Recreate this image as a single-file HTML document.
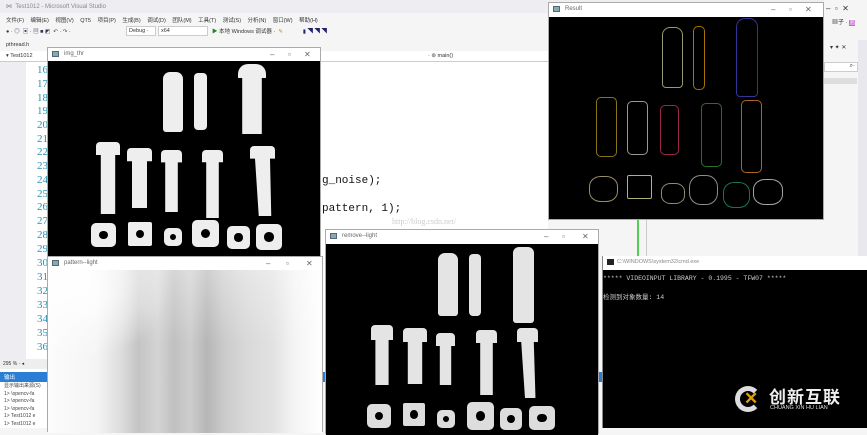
<!DOCTYPE html>
<html><head><meta charset="utf-8"><style>
*{margin:0;padding:0;box-sizing:border-box}
body{width:867px;height:428px;overflow:hidden;position:relative;background:#f5f5f5;font-family:"Liberation Sans","Noto Sans CJK SC",sans-serif;font-size:6px;color:#333}
.a{position:absolute}
.blk{background:#000}
.tb{background:#fff;border:1px solid #aaa}
.tt{font-size:6px;color:#666;padding:3px 0 0 16px;height:13px;white-space:nowrap}
.ic{position:absolute;left:4px;top:3px;width:7px;height:6px;background:#8aa;border:1px solid #567}
.ctl{position:absolute;top:2px;font-size:8px;color:#666}
.b{position:absolute;background:#eee;border-radius:4px}
.n{position:absolute;background:#eee;border-radius:5px}
.n::after{content:"";position:absolute;left:32%;top:32%;width:36%;height:36%;background:#000;border-radius:50%}
.ln{position:absolute;left:30px;width:18px;text-align:right;font-family:"Liberation Serif",serif;font-size:11px;color:#2b91af}
.c{position:absolute;border:1px solid;border-radius:5px;opacity:.75}
.h{position:absolute;border:1px solid;border-radius:40%;opacity:.75}
</style></head><body>
<div class="a" style="left:0;top:0;width:867px;height:13px;background:#eeeef2"></div>
<div class="a" style="left:6px;top:3px;color:#888;font-size:6px">⋈ &nbsp;Test1012 - Microsoft Visual Studio</div>
<div class="a" style="left:6px;top:16px;font-size:5.5px;color:#333;white-space:nowrap;word-spacing:5px">文件(F) 编辑(E) 视图(V) QT5 项目(P) 生成(B) 调试(D) 团队(M) 工具(T) 测试(S) 分析(N) 窗口(W) 帮助(H)</div>
<div class="a" style="left:6px;top:27px;font-size:5.5px;color:#335;white-space:nowrap">● · ◎ &nbsp;▣ · ▤ ■ ◩ &nbsp;↶ · ↷ ·</div>
<div class="a" style="left:126px;top:26px;width:30px;height:10px;border:1px solid #ccc;background:#fff;font-size:5.5px;padding:1px 2px">Debug ·</div>
<div class="a" style="left:158px;top:26px;width:50px;height:10px;border:1px solid #ccc;background:#fff;font-size:5.5px;padding:1px 2px">x64</div>
<div class="a" style="left:212px;top:27px;font-size:5.5px;color:#333;white-space:nowrap"><span style="color:#1a8a1a">▶</span> 本地 Windows 调试器 · &nbsp;<span style="color:#c80">✎</span> &nbsp;&nbsp;&nbsp;&nbsp;&nbsp;&nbsp;&nbsp;&nbsp;&nbsp;&nbsp;&nbsp;&nbsp;<span style="color:#226">▮ ◥ ◥ ◥</span></div>
<div class="a" style="left:6px;top:42px;font-size:5.5px">pthread.h</div>
<div class="a" style="left:0;top:51px;width:548px;height:11px;background:#fff;border-bottom:1px solid #ccc"></div>
<div class="a" style="left:6px;top:53px;font-size:5.5px">▾ Test1012</div>
<div class="a" style="left:428px;top:53px;font-size:5.5px">· ⊚ main()</div>
<div class="a" style="left:0;top:62px;width:548px;height:310px;background:#fff"></div>
<div class="a" style="left:0;top:62px;width:26px;height:300px;background:#eeeef2"></div>
<div class="ln" style="top:64px">16</div><div class="ln" style="top:78px">17</div><div class="ln" style="top:92px">18</div><div class="ln" style="top:105px">19</div><div class="ln" style="top:119px">20</div><div class="ln" style="top:133px">21</div><div class="ln" style="top:146px">22</div><div class="ln" style="top:160px">23</div><div class="ln" style="top:174px">24</div><div class="ln" style="top:188px">25</div><div class="ln" style="top:201px">26</div><div class="ln" style="top:215px">27</div><div class="ln" style="top:229px">28</div><div class="ln" style="top:243px">29</div><div class="ln" style="top:257px">30</div><div class="ln" style="top:271px">31</div><div class="ln" style="top:285px">32</div><div class="ln" style="top:299px">33</div><div class="ln" style="top:313px">34</div><div class="ln" style="top:327px">35</div><div class="ln" style="top:341px">36</div>
<div class="a" style="left:322px;top:175px;font-family:'Liberation Mono',monospace;font-size:11px;color:#111">g_noise);</div>
<div class="a" style="left:322px;top:203px;font-family:'Liberation Mono',monospace;font-size:11px;color:#111">pattern, 1);</div>
<div class="a" style="left:392px;top:217px;font-family:'Liberation Serif',serif;font-size:8px;color:#ccc">http://blog.csdn.net/</div>
<div class="a" style="left:0;top:359px;width:47px;height:10px;background:#eee;font-size:5px;padding:2px 3px">295 % · ◂</div>
<div class="a" style="left:0;top:372px;width:867px;height:10px;background:#2a7fd4"></div>
<div class="a" style="left:4px;top:373px;color:#fff;font-size:5.5px">输出</div>
<div class="a" style="left:0;top:382px;width:47px;height:46px;background:#fff;font-size:5px;line-height:7.5px;padding:1px 4px;color:#444;white-space:nowrap">显示输出来源(S)<br>1&gt; \opencv-fa<br>1&gt; \opencv-fa<br>1&gt; \opencv-fa<br>1&gt; Test1012 e<br>1&gt; Test1012 e</div>
<div class="a" style="left:824px;top:0;width:43px;height:372px;background:#f5f5f5"></div>
<div class="a" style="left:826px;top:4px;font-size:8px;color:#333;white-space:nowrap">– &nbsp;▫ &nbsp;✕</div>
<div class="a" style="left:832px;top:17px;font-size:6px;color:#333">▦子 · <span style="background:#c6c;color:#fff">蓝</span></div>
<div class="a" style="left:830px;top:44px;font-size:6px">▾ ✦ ✕</div>
<div class="a" style="left:824px;top:62px;width:34px;height:10px;background:#fff;border:1px solid #ccc;font-size:6px;text-align:right;padding-right:2px">⌕·</div>
<div class="a" style="left:824px;top:78px;width:33px;height:6px;background:#ddd"></div>
<div class="a" style="left:858px;top:40px;width:9px;height:330px;background:#e8e8ee"></div>
<div class="a" style="left:637px;top:220px;width:2px;height:36px;background:#5c5"></div>
<div class="a" style="left:646px;top:220px;width:1px;height:37px;background:#ccc"></div>

<div class="a tb" style="left:47px;top:47px;width:274px;height:212px">
<div class="tt">img_thr</div><div class="ic"></div>
<div class="ctl" style="left:222px">–</div><div class="ctl" style="left:240px">▫</div><div class="ctl" style="left:256px">✕</div>
<div class="a blk" style="left:0;top:13px;width:272px;height:197px"></div>
</div>
<div class="b" style="left:163px;top:72px;width:20px;height:60px;border-radius:7px 7px 3px 3px"></div>
<div class="b" style="left:194px;top:73px;width:13px;height:57px"></div>
<div class="b" style="left:238px;top:64px;width:28px;height:70px;border-radius:10px 10px 3px 3px;clip-path:polygon(0 0,100% 0,100% 20%,85% 20%,85% 100%,15% 100%,15% 20%,0 20%)"></div>
<div class="b" style="left:96px;top:142px;width:24px;height:72px;clip-path:polygon(0 0,100% 0,100% 18%,80% 18%,80% 100%,20% 100%,20% 18%,0 18%)"></div>
<div class="b" style="left:127px;top:148px;width:25px;height:60px;clip-path:polygon(0 0,100% 0,100% 22%,80% 22%,80% 100%,20% 100%,20% 22%,0 22%)"></div>
<div class="b" style="left:161px;top:150px;width:21px;height:62px;clip-path:polygon(0 0,100% 0,100% 20%,80% 20%,80% 100%,20% 100%,20% 20%,0 20%)"></div>
<div class="b" style="left:202px;top:150px;width:21px;height:68px;clip-path:polygon(0 0,100% 0,100% 18%,80% 18%,80% 100%,20% 100%,20% 18%,0 18%)"></div>
<div class="b" style="left:250px;top:146px;width:25px;height:70px;clip-path:polygon(0 0,100% 0,100% 18%,80% 18%,85% 100%,35% 100%,20% 18%,0 18%)"></div>
<div class="n" style="left:91px;top:223px;width:25px;height:24px"></div>
<div class="n" style="left:128px;top:222px;width:24px;height:24px;border-radius:2px"></div>
<div class="n" style="left:164px;top:228px;width:18px;height:18px"></div>
<div class="n" style="left:192px;top:220px;width:27px;height:27px"></div>
<div class="n" style="left:227px;top:226px;width:23px;height:23px"></div>
<div class="n" style="left:256px;top:224px;width:26px;height:26px"></div>

<div class="a tb" style="left:548px;top:2px;width:276px;height:218px">
<div class="tt">Result</div><div class="ic"></div>
<div class="ctl" style="left:222px">–</div><div class="ctl" style="left:240px">▫</div><div class="ctl" style="left:256px">✕</div>
<div class="a blk" style="left:0;top:14px;width:274px;height:202px"></div>
</div>
<div class="c" style="left:662px;top:27px;width:21px;height:61px;border-color:#cc9;border-radius:8px 8px 4px 4px"></div>
<div class="c" style="left:693px;top:26px;width:12px;height:64px;border-color:#d90"></div>
<div class="c" style="left:736px;top:18px;width:22px;height:79px;border-color:#44c;border-radius:9px 9px 4px 4px"></div>
<div class="c" style="left:596px;top:97px;width:21px;height:60px;border-color:#b92"></div>
<div class="c" style="left:627px;top:101px;width:21px;height:54px;border-color:#ccb"></div>
<div class="c" style="left:660px;top:105px;width:19px;height:50px;border-color:#c36"></div>
<div class="c" style="left:701px;top:103px;width:21px;height:64px;border-color:#393"></div>
<div class="c" style="left:741px;top:100px;width:21px;height:73px;border-color:#d83"></div>
<div class="h" style="left:589px;top:176px;width:29px;height:26px;border-color:#cb8"></div>
<div class="c" style="left:627px;top:175px;width:25px;height:24px;border-color:#ee9;border-radius:2px"></div>
<div class="h" style="left:661px;top:183px;width:24px;height:21px;border-color:#bb9"></div>
<div class="h" style="left:689px;top:175px;width:29px;height:30px;border-color:#bbb"></div>
<div class="h" style="left:723px;top:182px;width:27px;height:26px;border-color:#297"></div>
<div class="h" style="left:753px;top:179px;width:30px;height:26px;border-color:#ddd"></div>

<div class="a tb" style="left:47px;top:256px;width:276px;height:176px">
<div class="tt">pattern--light</div><div class="ic"></div>
<div class="ctl" style="left:218px">–</div><div class="ctl" style="left:238px">▫</div><div class="ctl" style="left:258px">✕</div>
<div class="a" style="left:0;top:13px;width:274px;height:163px;background:linear-gradient(90deg,#fcfcfc 0%,#f4f4f4 18%,#dcdcdc 27%,#c4c4c4 33%,#d4d4d4 40%,#c0c0c0 46%,#cdcdcd 52%,#b6b6b6 58%,#cacaca 64%,#d8d8d8 72%,#e2e2e2 82%,#f4f4f4 90%,#fff 100%)"></div>
<div class="a" style="left:0;top:13px;width:274px;height:163px;background:radial-gradient(ellipse 35% 45% at 10% 10%,rgba(255,255,255,.95),rgba(255,255,255,0))"></div>
<div class="a" style="left:0;top:13px;width:274px;height:163px;background:linear-gradient(180deg,rgba(255,255,255,.35),rgba(255,255,255,0) 45%)"></div>
</div>

<div class="a tb" style="left:325px;top:229px;width:274px;height:205px">
<div class="tt">remove--light</div><div class="ic"></div>
<div class="ctl" style="left:218px">–</div><div class="ctl" style="left:236px">▫</div><div class="ctl" style="left:256px">✕</div>
<div class="a blk" style="left:0;top:14px;width:272px;height:191px"></div>
</div>
<div class="b" style="left:438px;top:253px;width:20px;height:63px;border-radius:7px 7px 3px 3px;background:#e4e4e4"></div>
<div class="b" style="left:469px;top:254px;width:12px;height:62px;background:#e4e4e4"></div>
<div class="b" style="left:513px;top:247px;width:21px;height:76px;border-radius:6px 6px 3px 3px;background:#e4e4e4"></div>
<div class="b" style="left:371px;top:325px;width:22px;height:60px;background:#e4e4e4;clip-path:polygon(0 0,100% 0,100% 25%,80% 25%,80% 100%,20% 100%,20% 25%,0 25%)"></div>
<div class="b" style="left:403px;top:328px;width:24px;height:56px;background:#e4e4e4;clip-path:polygon(0 0,100% 0,100% 25%,80% 25%,80% 100%,20% 100%,20% 25%,0 25%)"></div>
<div class="b" style="left:436px;top:333px;width:19px;height:52px;background:#e4e4e4;clip-path:polygon(0 0,100% 0,100% 25%,80% 25%,80% 100%,20% 100%,20% 25%,0 25%)"></div>
<div class="b" style="left:476px;top:330px;width:21px;height:65px;background:#e4e4e4;clip-path:polygon(0 0,100% 0,100% 20%,80% 20%,80% 100%,20% 100%,20% 20%,0 20%)"></div>
<div class="b" style="left:517px;top:328px;width:21px;height:70px;background:#e4e4e4;clip-path:polygon(0 0,100% 0,100% 20%,80% 20%,88% 100%,38% 100%,20% 20%,0 20%)"></div>
<div class="n" style="left:367px;top:404px;width:24px;height:24px;background:#ddd"></div>
<div class="n" style="left:403px;top:403px;width:22px;height:23px;border-radius:2px;background:#ddd"></div>
<div class="n" style="left:437px;top:410px;width:18px;height:18px;background:#ddd"></div>
<div class="n" style="left:467px;top:402px;width:27px;height:28px;background:#ddd"></div>
<div class="n" style="left:500px;top:408px;width:22px;height:22px;background:#ddd"></div>
<div class="n" style="left:529px;top:406px;width:26px;height:24px;background:#ddd"></div>

<div class="a" style="left:602px;top:256px;width:265px;height:172px;background:#000;border-left:1px solid #888"></div>
<div class="a" style="left:603px;top:256px;width:264px;height:14px;background:#fff"></div>
<div class="a" style="left:607px;top:259px;width:7px;height:6px;background:#222"></div>
<div class="a" style="left:617px;top:259px;font-size:5.5px;color:#888">C:\WINDOWS\system32\cmd.exe</div>
<div class="a" style="left:603px;top:275px;font-family:'Liberation Mono',monospace;font-size:6.5px;color:#ccc;white-space:nowrap">***** VIDEOINPUT LIBRARY - 0.1995 - TFW07 *****</div>
<div class="a" style="left:603px;top:291px;font-family:'Liberation Mono','Noto Sans CJK SC',monospace;font-size:6.5px;color:#ccc;white-space:nowrap">检测到对象数量:  14</div>
<div class="a" style="left:735px;top:386px;width:26px;height:26px;border-radius:50%;border:5px solid #ddd;border-right-color:transparent"></div>
<div class="a" style="left:744px;top:392px;width:14px;height:14px;color:#e0a000;font-size:17px;font-weight:bold;line-height:14px">✕</div>
<div class="a" style="left:769px;top:383px;font-size:17px;color:#eee;font-weight:bold;letter-spacing:1px">创新互联</div>
<div class="a" style="left:770px;top:405px;font-size:5.5px;color:#ddd;white-space:nowrap">CHUANG XIN HU LIAN</div>
</body></html>
